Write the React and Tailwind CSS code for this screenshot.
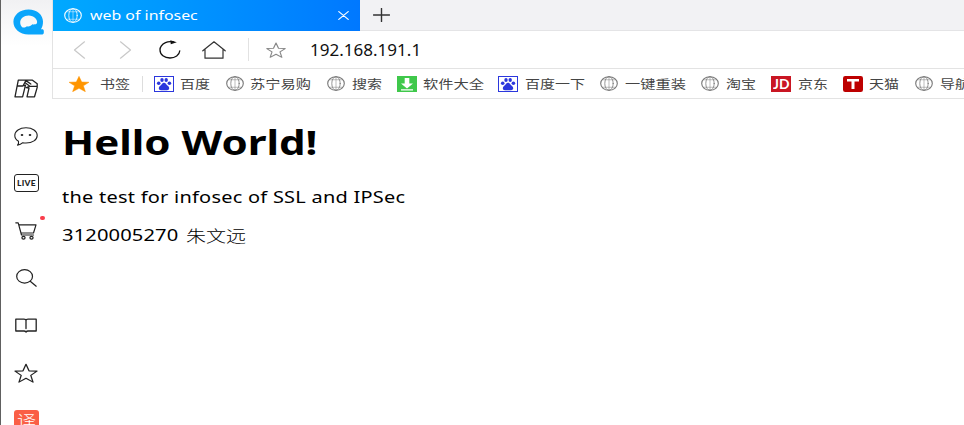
import { useLayoutEffect, useRef, useState } from "react";

const FONT = "font-['Noto_Sans','Noto_Sans_CJK_SC',sans-serif]";

// Stretches a line of text horizontally so that it spans `width` pixels.
function Fit({ width, className = "", children }) {
  const ref = useRef(null);
  const [scale, setScale] = useState(1.25);
  useLayoutEffect(() => {
    setScale(width / ref.current.offsetWidth);
  }, [width]);
  return (
    <span className="flex shrink-0 whitespace-nowrap" style={{ width }}>
      <span
        ref={ref}
        className={`block shrink-0 origin-left ${className}`}
        style={{ transform: `scaleX(${scale})` }}
      >
        {children}
      </span>
    </span>
  );
}

function Icon({ className, box, children, sw = 1.2 }) {
  return (
    <svg
      className={`block shrink-0 ${className}`}
      viewBox={box}
      preserveAspectRatio="none"
      fill="none"
      stroke="currentColor"
      strokeWidth={sw}
      strokeLinejoin="round"
      strokeLinecap="round"
    >
      {children}
    </svg>
  );
}

const STAR = "M12 1.5 L15 9 L23 9.4 L16.8 14.2 L19 22 L12 17.6 L5 22 L7.2 14.2 L1 9.4 L9 9 Z";

function Globe({ className }) {
  return (
    <Icon className={className} box="0 0 18 16" sw={1.1}>
      <ellipse cx="9" cy="8" rx="8.3" ry="7.3" />
      <ellipse cx="9" cy="8" rx="4.2" ry="7.3" strokeWidth=".8" />
      <path d="M9 .8V15.2M2.2 4H15.8M2.2 12H15.8" strokeWidth=".5" />
    </Icon>
  );
}

function Paw() {
  return (
    <svg className="block h-4 w-5 shrink-0" viewBox="0 0 20 16">
      <rect x=".5" y=".5" width="19" height="15" fill="#fff" stroke="#2b37dd" />
      <g fill="#2b37dd">
        <ellipse cx="4.7" cy="7.2" rx="1.8" ry="1.8" />
        <ellipse cx="8" cy="4" rx="1.7" ry="1.9" />
        <ellipse cx="12.2" cy="4" rx="1.7" ry="1.9" />
        <ellipse cx="15.4" cy="7.2" rx="1.8" ry="1.8" />
        <path d="M10 6.8C8.2 6.8 7.7 8.8 6 10 4.2 11.3 4.4 14.2 7 14.2H13C15.7 14.2 15.8 11.3 14 10 12.3 8.8 11.8 6.8 10 6.8Z" />
      </g>
    </svg>
  );
}

function Download() {
  return (
    <svg className="block h-4 w-5 shrink-0" viewBox="0 0 20 16">
      <rect width="20" height="16" fill="#3fc84b" />
      <path d="M7.7 2H12.3V7.5H16L10 12.5 4 7.5H7.7ZM4 13.3H16V14.5H4Z" fill="#fff" />
    </svg>
  );
}

function JD() {
  return (
    <span className="flex h-4 w-5 shrink-0 items-center justify-center bg-[#c91623] text-white">
      <Fit width={16} className="font-['Lato',sans-serif] text-[13px] leading-4 font-bold">JD</Fit>
    </span>
  );
}

function Tmall() {
  return (
    <svg className="block h-4 w-5 shrink-0" viewBox="0 0 20 16">
      <rect width="20" height="16" rx="2.2" fill="#bd0000" />
      <path d="M4 3H16V5.4H11.5V13H8.5V5.4H4Z" fill="#fff" />
    </svg>
  );
}

function BookmarkGlobe() {
  return <Globe className="h-[15px] w-[18px] text-[#777]" />;
}

const BOOKMARKS = [
  { Mark: Paw, text: "百度", left: "ml-[11px]", gap: "gap-[6px]", width: 30 },
  { Mark: BookmarkGlobe, text: "苏宁易购", left: "ml-[16px]", gap: "gap-[6px]", width: 61 },
  { Mark: BookmarkGlobe, text: "搜索", left: "ml-[16px]", gap: "gap-[7px]", width: 30 },
  { Mark: Download, text: "软件大全", left: "ml-[15px]", gap: "gap-[6px]", width: 61 },
  { Mark: Paw, text: "百度一下", left: "ml-[14px]", gap: "gap-[7px]", width: 60 },
  { Mark: BookmarkGlobe, text: "一键重装", left: "ml-[15px]", gap: "gap-[7px]", width: 61 },
  { Mark: BookmarkGlobe, text: "淘宝", left: "ml-[15px]", gap: "gap-[7px]", width: 30 },
  { Mark: JD, text: "京东", left: "ml-[15px]", gap: "gap-[7px]", width: 30 },
  { Mark: Tmall, text: "天猫", left: "ml-[15px]", gap: "gap-[6px]", width: 30 },
  { Mark: BookmarkGlobe, text: "导航", left: "ml-[16px]", gap: "gap-[7px]", width: 30 },
];

function SideItem({ children }) {
  return <div className="relative flex h-[47.4px] w-full shrink-0 items-center justify-center">{children}</div>;
}

function Sidebar() {
  return (
    <aside className="flex w-[52px] shrink-0 flex-col items-center overflow-hidden border-l border-[#606060] bg-linear-to-b from-[#f1f1f3] to-white to-[46px]">
      <svg className="mt-[9px] ml-[3px] block h-[26px] w-[31px] shrink-0" viewBox="0 0 31 26">
        <path
          fillRule="evenodd"
          fill="#0aa5fb"
          d="M15.5.4C24 .4 30 5.8 30 12.6 30 15.6 29.4 18.2 28 20.2H29C30.2 20.2 30.8 20.8 30.8 22V23.4C30.8 24.8 30 25.5 28.6 25.5H15.5C6.5 25.5.4 19.8.4 12.8.4 5.8 7 .4 15.5.4ZM9.6 18.4C11.4 18.8 12.6 18.2 14 17.2 16 18 18.2 16.6 19.4 15.2 21 15.6 23 15.4 24 14.2 25 10.4 21 6.4 15.7 6.4 10.8 6.4 7.2 9.6 7.2 13.2 7.2 15.4 8 17.6 9.6 18.4Z"
        />
      </svg>
      <nav className="mt-[30px] flex w-full flex-col pr-px text-[#222]">
        <SideItem>
          <Icon className="h-[19px] w-[24px]" box="0 0 24 19" sw={1.3}>
            <path d="M4.3 1.2H18.5L23.2 4.8V8.4L20.5 17.8H13L15 9.2 12.3 8.6 15.6 7.3H22.8M4.3 1.2 1 17.8H8.6L11.5 6.2 8.8 7H3.2M9.2 6.5 12 1.4M11.5 4 15.8 7.2M12 1.6 16.8 5" />
          </Icon>
        </SideItem>
        <SideItem>
          <Icon className="h-[19px] w-[24px]" box="0 0 24 19" sw={1.1}>
            <path d="M12 .8C18.5.8 23.2 4 23.2 8.4 23.2 12.8 18.5 16 12 16 10.8 16 9.8 15.9 8.8 15.7 7.5 17 5.5 18 3.5 18.2 4.4 17.2 4.8 15.6 4.5 14.3 2.2 12.9.8 10.8.8 8.4.8 4 5.5.8 12 .8Z" />
            <g fill="currentColor" stroke="none">
              <ellipse cx="8" cy="8" rx="1.3" ry="1.1" />
              <ellipse cx="16" cy="8" rx="1.3" ry="1.1" />
            </g>
          </Icon>
        </SideItem>
        <SideItem>
          <div className="flex h-[18px] w-[25px] items-center justify-center rounded-[3px] border border-[#222]">
            <Fit width={19} className="font-['Lato',sans-serif] text-[8px] leading-[16px] font-black tracking-[0.3px]">LIVE</Fit>
          </div>
        </SideItem>
        <SideItem>
          <Icon className="h-[18px] w-[22px]" box="0 0 22 18">
            <path d="M.8.8H3.2L6.5 13H18.5M4.2 2.8H21L18.5 11H6.3" />
            <ellipse cx="8.5" cy="15.8" rx="1.6" ry="1.4" />
            <ellipse cx="16.5" cy="15.8" rx="1.6" ry="1.4" />
          </Icon>
          <span className="absolute top-[9px] right-[6px] h-1 w-[5px] rounded-full bg-[#fa3e4c]" />
        </SideItem>
        <SideItem>
          <Icon className="h-[18px] w-[21px]" box="0 0 21 18">
            <ellipse cx="8.6" cy="7.4" rx="7.9" ry="6.7" />
            <path d="M14.2 12.2 20.2 17.2" />
          </Icon>
        </SideItem>
        <SideItem>
          <Icon className="h-[15px] w-[22px]" box="0 0 22 15" sw={1.3}>
            <path d="M.8 1.2H9C10.2 1.2 11 2 11 2.6 11 2 11.8 1.2 13 1.2H21.2V13H13C12 13 11.5 13.3 11 14 10.5 13.3 10 13 9 13H.8ZM11 2.6V10.5" />
          </Icon>
        </SideItem>
        <SideItem>
          <Icon className="h-[20px] w-[24px]" box="0 0 24 23" sw={1.3}>
            <path d={STAR} />
          </Icon>
        </SideItem>
        <SideItem>
          <div className="flex h-5 w-[25px] items-center justify-center rounded-[3px] bg-[#fa5f46] text-white">
            <Fit width={19} className="text-[15px] leading-5 font-light">译</Fit>
          </div>
        </SideItem>
      </nav>
    </aside>
  );
}

export default function App() {
  return (
    <div className={`flex h-[425px] w-[964px] overflow-hidden bg-white ${FONT}`}>
      <Sidebar />
      <div className="flex min-w-0 flex-1 flex-col">
        <header className="flex flex-col border-l border-[#e3e3e3]">
          <div className="flex h-[31px] bg-[#f2f2f4]">
            <div className="flex h-[31px] w-[307px] items-center bg-linear-to-r from-[#00a9ff] to-[#0078ff] pl-[11px] text-white">
              <Globe className="h-[15px] w-[18px]" />
              <div className="ml-2 pt-px">
                <Fit width={108} className="text-[12.5px] leading-[30px]">web of infosec</Fit>
              </div>
              <Icon className="ml-[140px] h-[9px] w-[11px]" box="0 0 11 9" sw={1.2}>
                <path d="M.8.6 10.2 8.4M10.2.6.8 8.4" />
              </Icon>
            </div>
            <div className="flex flex-1 items-center border-b border-[#e4e4e6] pl-[13px] text-[#333]">
              <Icon className="h-[14px] w-[17px]" box="0 0 17 14" sw={1.4}>
                <path d="M.5 7H16.5M8.5.5V13.5" />
              </Icon>
            </div>
          </div>
          <div className="flex h-[38px] items-center border-b border-[#e3e3e3] pl-[20px]">
            <Icon className="h-[18px] w-[13px] text-[#c8c8c8]" box="0 0 13 18">
              <path d="M11.5.8 1.5 9 11.5 17.2" />
            </Icon>
            <Icon className="ml-[33px] h-[18px] w-[13px] text-[#c8c8c8]" box="0 0 13 18">
              <path d="M1.5.8 11.5 9 1.5 17.2" />
            </Icon>
            <Icon className="ml-[27px] h-[19px] w-[22px] text-[#111]" box="0 0 22 19" sw={1.3}>
              <path d="M14.5 2C12 1.5 9 1.5 6.5 2.7 3 4.4 1 7 1 10 1 14.6 5.4 18 11 18 16.2 18 20.4 15 20.8 10.8" />
              <path d="M11.3 .2 17.8 2.2 11.8 4.3Z" fill="currentColor" stroke="none" />
            </Icon>
            <Icon className="ml-[21px] h-[18px] w-[24px] text-[#333]" box="0 0 24 18">
              <path d="M.8 9.8 12 .8 23.2 9.8M3 8.4V17.2H21V8.4" />
            </Icon>
            <div className="ml-[22px] h-[23px] w-px bg-[#e2e2e2]" />
            <Icon className="ml-[17px] h-[16px] w-[20px] text-[#888]" box="0 0 24 23" sw={1.4}>
              <path d={STAR} />
            </Icon>
            <div className="ml-[24px] text-[#111]">
              <Fit width={111} className="text-[15.5px] leading-[36px]">192.168.191.1</Fit>
            </div>
          </div>
          <div className="flex h-[30px] items-center border-b border-[#e3e3e3] pl-[16px] text-[#444]">
            <svg className="block h-4 w-5 shrink-0" viewBox="1 1 22 21.5" preserveAspectRatio="none">
              <path d={STAR} fill="#ff9500" stroke="#ff9500" strokeWidth=".6" />
            </svg>
            <div className="ml-[11px] pt-[2px]">
              <Fit width={30} className="text-[12px] leading-[28px]">书签</Fit>
            </div>
            <div className="ml-[12px] h-4 w-px shrink-0 bg-[#ddd]" />
            {BOOKMARKS.map(({ Mark, text, left, gap, width }) => (
              <div key={text} className={`flex shrink-0 items-center ${left} ${gap}`}>
                <Mark />
                <div className="pt-[2px]">
                  <Fit width={width} className="text-[12px] leading-[28px]">{text}</Fit>
                </div>
              </div>
            ))}
          </div>
        </header>
        <main className="flex flex-col pl-[10px] text-black">
          <h1 className="mt-[19px]">
            <Fit width={256} className="text-[34.5px] leading-[48px] font-bold">Hello World!</Fit>
          </h1>
          <p className="mt-[19px]">
            <Fit width={343} className="text-[16px] leading-6 tracking-[0.2px]">the test for infosec of SSL and IPSec</Fit>
          </p>
          <div className="mt-[14px] flex">
            <Fit width={117} className="text-[16px] leading-6 tracking-[0.1px]">3120005270</Fit>
            <div className="ml-[7px] pt-px">
              <Fit width={60} className="text-[16px] leading-6 font-light">朱文远</Fit>
            </div>
          </div>
        </main>
      </div>
    </div>
  );
}
